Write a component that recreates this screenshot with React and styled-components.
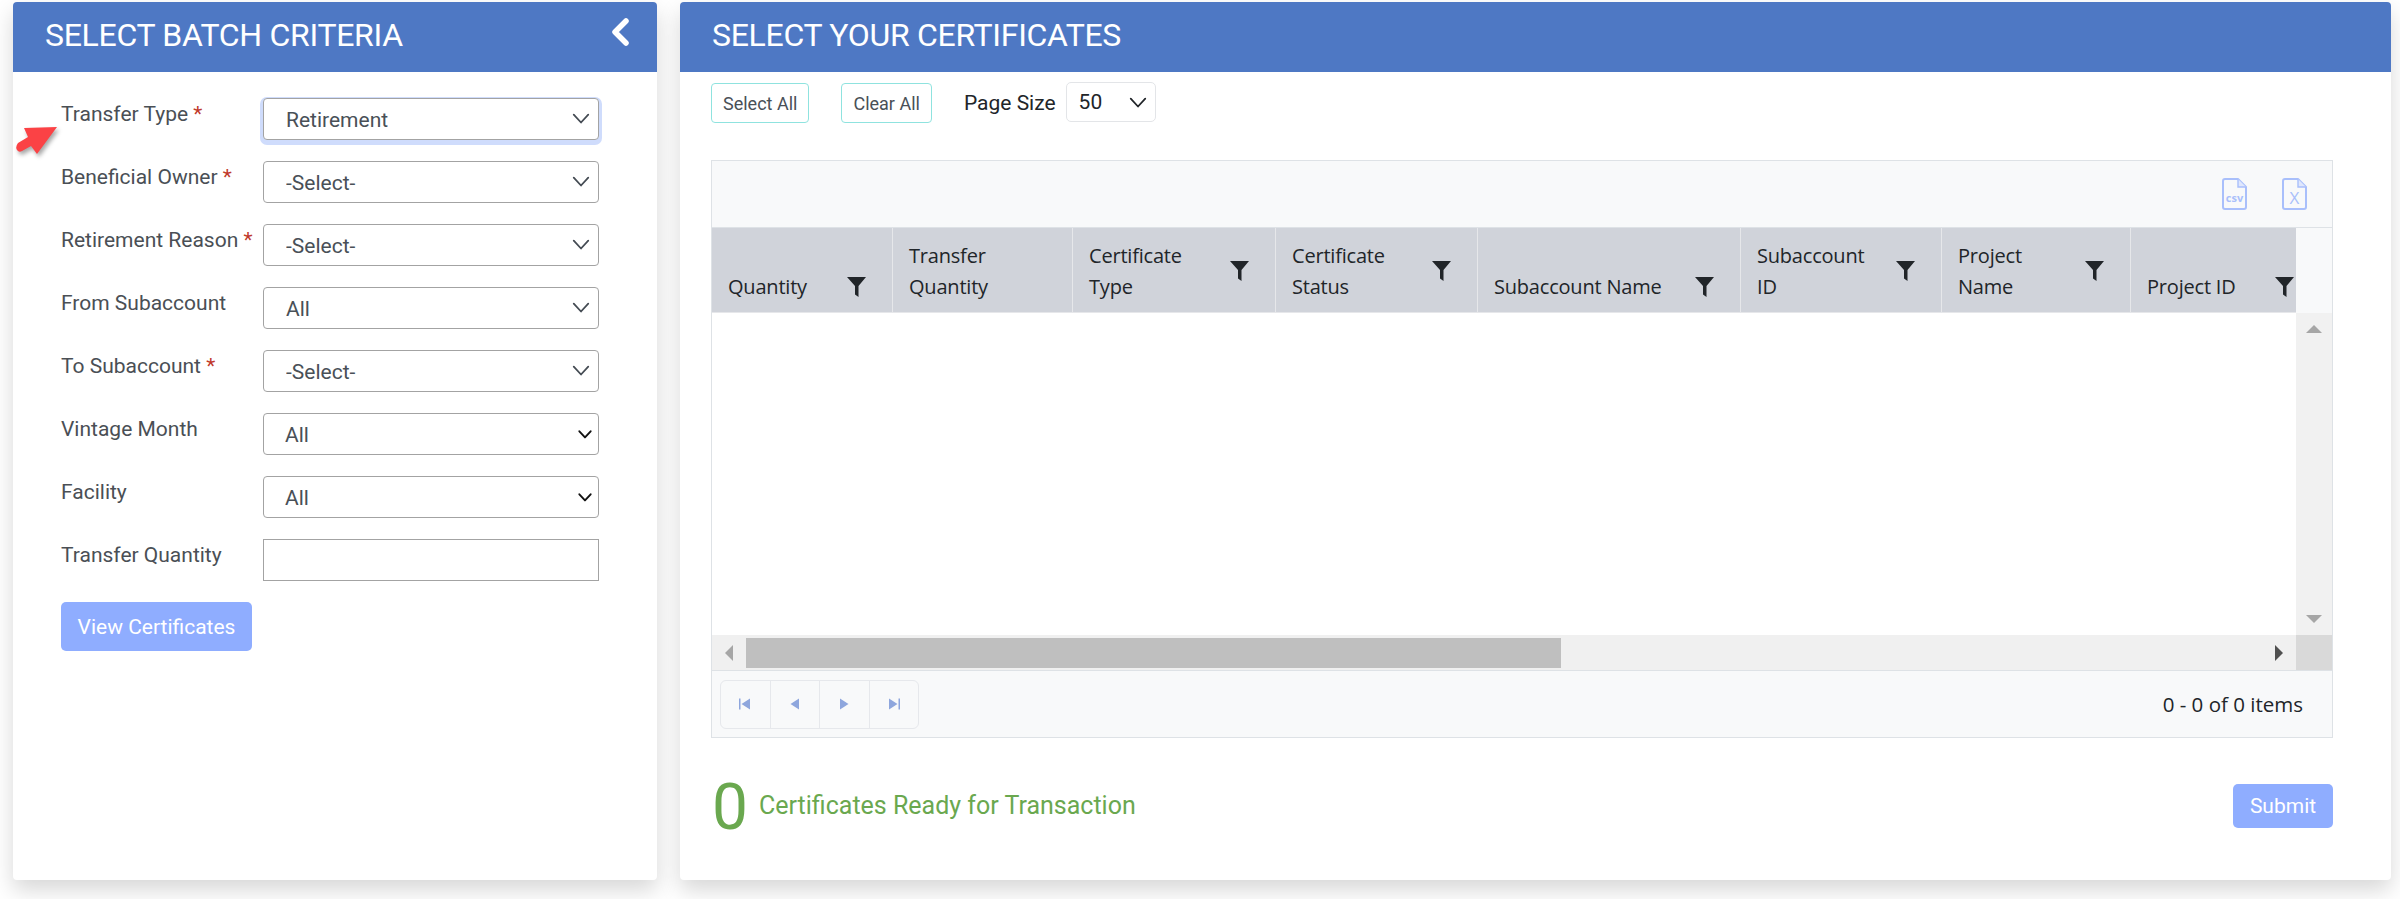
import React from "react";
import styled, { createGlobalStyle } from "styled-components";

const GlobalStyle = createGlobalStyle`
  html, body { margin: 0; padding: 0; background: #fff; }
  body { font-family: Roboto, "Liberation Sans", sans-serif; overflow: hidden; }
`;

const fields = [
  { label: "Transfer Type", required: true, value: "Retirement", focused: true },
  { label: "Beneficial Owner", required: true, value: "-Select-" },
  { label: "Retirement Reason", required: true, value: "-Select-" },
  { label: "From Subaccount", value: "All" },
  { label: "To Subaccount", required: true, value: "-Select-" },
  { label: "Vintage Month", value: "All", small: true },
  { label: "Facility", value: "All", small: true },
];

const columns = [
  { lines: ["Quantity"], width: 181, filter: true },
  { lines: ["Transfer", "Quantity"], width: 180 },
  { lines: ["Certificate", "Type"], width: 203, filter: true },
  { lines: ["Certificate", "Status"], width: 202, filter: true },
  { lines: ["Subaccount Name"], width: 263, filter: true },
  { lines: ["Subaccount", "ID"], width: 201, filter: true },
  { lines: ["Project", "Name"], width: 189, filter: true },
  { lines: ["Project ID"], width: 190, filter: true },
];

const Chevron = ({ width = 18, color = "#444b53", stroke = 1.6 }) => (
  <svg width={width} height={width * 0.62} viewBox="0 0 16 10" fill="none" stroke={color} strokeWidth={stroke} strokeLinecap="round" strokeLinejoin="round">
    <path d="M1.5 1.5 8 8.5l6.5-7" />
  </svg>
);

const FilterIcon = () => (
  <svg width="19" height="20" viewBox="0 0 19 20" fill="#212529">
    <path d="M0 0h19l-7.500 9v11L8 17.500V9z" />
  </svg>
);

const FileIcon = ({ children }) => (
  <svg width="25" height="32" viewBox="0 0 25 32" fill="none" stroke="#a9bffb" strokeWidth="2">
    <path d="M3 1h13l8 8v20a2 2 0 0 1-2 2H3a2 2 0 0 1-2-2V3a2 2 0 0 1 2-2z" strokeLinejoin="round" />
    <path d="M16 1v8h8" fill="#dfe7fd" strokeWidth="1.4" />
    {children}
  </svg>
);

const PagerGlyph = ({ d }) => (
  <svg width="14" height="14" viewBox="0 0 14 14" fill="#8ea6dd">
    <path d={d} />
  </svg>
);

export default function App() {
  return (
    <>
      <GlobalStyle />
      <Page>
        <SidePanel>
          <PanelHeader>
            <PanelTitle>SELECT BATCH CRITERIA</PanelTitle>
            <CollapseIcon width="20" height="28" viewBox="0 0 20 28" fill="none" stroke="#fff" strokeWidth="5.500" strokeLinecap="round" strokeLinejoin="round">
              <path d="M16 3 5 14l11 11" />
            </CollapseIcon>
          </PanelHeader>
          <FormBody>
            <PointerArrow width="46" height="34" viewBox="0 0 46 34">
              <path d="M44 2 11 3l4 9-10 6q-3 4-1 7 2 3 5 1l9-5 6 8z" fill="#fb4245" />
            </PointerArrow>
            {fields.map((f) => (
              <FieldRow key={f.label}>
                <FieldLabel>
                  {f.label}
                  {f.required && <Star> *</Star>}
                </FieldLabel>
                <SelectWrap>
                  <FieldSelect $focused={f.focused} $small={f.small} defaultValue={f.value}>
                    <option>{f.value}</option>
                  </FieldSelect>
                  {f.small ? (
                    <SmallArrow>
                      <Chevron width={14} color="#111" stroke={2.2} />
                    </SmallArrow>
                  ) : (
                    <SelectArrow>
                      <Chevron />
                    </SelectArrow>
                  )}
                </SelectWrap>
              </FieldRow>
            ))}
            <FieldRow>
              <FieldLabel>Transfer Quantity</FieldLabel>
              <QuantityInput />
            </FieldRow>
            <PrimaryButton type="button">View Certificates</PrimaryButton>
          </FormBody>
        </SidePanel>

        <MainPanel>
          <PanelHeader>
            <PanelTitle>SELECT YOUR CERTIFICATES</PanelTitle>
          </PanelHeader>
          <MainBody>
            <ActionBar>
              <OutlineButton type="button">Select All</OutlineButton>
              <OutlineButton type="button">Clear All</OutlineButton>
              <PageSizeLabel>Page Size</PageSizeLabel>
              <SelectWrap>
                <PageSizeSelect defaultValue="50">
                  <option>50</option>
                </PageSizeSelect>
                <SelectArrow>
                  <Chevron color="#212529" />
                </SelectArrow>
              </SelectWrap>
            </ActionBar>

            <Grid>
              <GridToolbar>
                <FileIcon>
                  <text x="12.500" y="24" textAnchor="middle" fontSize="11" fontWeight="700" fontFamily="Open Sans, sans-serif" fill="#a9bffb" stroke="none">csv</text>
                </FileIcon>
                <FileIcon>
                  <text x="12.500" y="26" textAnchor="middle" fontSize="17" fontFamily="Open Sans, sans-serif" fill="#a9bffb" stroke="none">X</text>
                </FileIcon>
              </GridToolbar>
              <HeaderRow>
                <HeaderCells>
                  {columns.map((c, i) => (
                    <HeaderCell key={i} $width={c.width}>
                      <HeaderInner>
                        <div>
                          {c.lines.map((line) => (
                            <div key={line}>{line}</div>
                          ))}
                        </div>
                        {c.filter && <FilterIcon />}
                      </HeaderInner>
                    </HeaderCell>
                  ))}
                </HeaderCells>
              </HeaderRow>
              <GridBody>
                <EmptyRows />
                <VerticalTrack>
                  <Triangle $dir="up" $color="#a6a6a6" />
                  <Triangle $dir="down" $color="#a6a6a6" />
                </VerticalTrack>
              </GridBody>
              <HorizontalBar>
                <HorizontalTrack>
                  <ArrowSlot>
                    <Triangle $dir="left" $color="#a6a6a6" />
                  </ArrowSlot>
                  <HorizontalThumb />
                  <ArrowSlot>
                    <Triangle $dir="right" $color="#505050" />
                  </ArrowSlot>
                </HorizontalTrack>
                <ScrollCorner />
              </HorizontalBar>
              <Pager>
                <PagerGroup>
                  <PagerButton><PagerGlyph d="M1 1.500h1.500v11H1zM12 1.500v11L3.500 7z" /></PagerButton>
                  <PagerButton><PagerGlyph d="M11 1.500v11L2.500 7z" /></PagerButton>
                  <PagerButton><PagerGlyph d="M3 1.500v11L11.500 7z" /></PagerButton>
                  <PagerButton><PagerGlyph d="M2 1.500v11L10.500 7zM11.500 1.500H13v11h-1.500z" /></PagerButton>
                </PagerGroup>
                <PagerInfo>0 - 0 of 0 items</PagerInfo>
              </Pager>
            </Grid>

            <Footer>
              <ReadyCount>
                <BigZero>0</BigZero>
                <ReadyText>Certificates Ready for Transaction</ReadyText>
              </ReadyCount>
              <SubmitButton type="button">Submit</SubmitButton>
            </Footer>
          </MainBody>
        </MainPanel>
      </Page>
    </>
  );
}

const Page = styled.div`
  display: flex;
  gap: 23px;
  width: 2400px;
  height: 899px;
  box-sizing: border-box;
  padding: 2px 9px 19px 13px;
`;

const Panel = styled.section`
  background: #fff;
  border-radius: 4px;
  box-shadow: 0 10px 22px rgba(0, 0, 0, 0.16);
  display: flex;
  flex-direction: column;
  overflow: hidden;
`;

const SidePanel = styled(Panel)`
  width: 644px;
  flex: none;
`;

const MainPanel = styled(Panel)`
  flex: 1;
`;

const PanelHeader = styled.header`
  height: 70px;
  flex: none;
  box-sizing: border-box;
  background: #4e78c4;
  display: flex;
  align-items: center;
  justify-content: space-between;
  padding: 0 27px 5px 32px;
`;

const PanelTitle = styled.h2`
  margin: 0;
  color: #fff;
  font-size: 32px;
  font-weight: 400;
  letter-spacing: -0.3px;
  line-height: 1;
`;

const CollapseIcon = styled.svg`
  margin-bottom: 6px;
`;

const FormBody = styled.div`
  position: relative;
  padding: 26px 0 0 48px;
`;

const PointerArrow = styled.svg`
  position: absolute;
  left: 0;
  top: 53px;
  filter: drop-shadow(2px 3px 2px rgba(0, 0, 0, 0.35));
`;

const FieldRow = styled.div`
  display: grid;
  grid-template-columns: 202px 336px;
  height: 63px;
`;

const FieldLabel = styled.label`
  font-size: 21px;
  line-height: 30px;
  padding-top: 1px;
  color: #4a4f55;
`;

const Star = styled.span`
  color: #c0392b;
`;

const SelectWrap = styled.div`
  position: relative;
  height: 42px;
`;

const FieldSelect = styled.select`
  width: 100%;
  height: 42px;
  box-sizing: border-box;
  background: #fff;
  border: 1px solid #a3a3a3;
  border-radius: 4px;
  padding: 2px 0 0 ${(p) => (p.$small ? "21px" : "22px")};
  color: #495057;
  font: 400 21px Roboto, sans-serif;
  appearance: none;
  box-shadow: ${(p) => (p.$focused ? "0 2px 0 3px #cfdcfc" : "none")};
  outline: none;
`;

const SelectArrow = styled.span`
  position: absolute;
  right: 9px;
  top: 15px;
  line-height: 0;
  pointer-events: none;
`;

const SmallArrow = styled(SelectArrow)`
  right: 7px;
  top: 17px;
`;

const QuantityInput = styled.input`
  width: 100%;
  height: 42px;
  box-sizing: border-box;
  border: 1px solid #a3a3a3;
  background: #fff;
  outline: none;
`;

const PrimaryButton = styled.button`
  display: block;
  width: 191px;
  height: 49px;
  border: 0;
  border-radius: 5px;
  background: #8fadff;
  color: #fff;
  font: 400 21px Roboto, sans-serif;
  padding: 0;
`;

const MainBody = styled.div`
  flex: 1;
  display: flex;
  flex-direction: column;
  padding: 10px 58px 0 31px;
`;

const ActionBar = styled.div`
  display: flex;
  align-items: center;
  height: 42px;
`;

const OutlineButton = styled.button`
  height: 40px;
  padding: 0 11px;
  margin-right: 32px;
  background: #fff;
  border: 1px solid #8fe3df;
  border-radius: 4px;
  color: #495057;
  font: 400 18px Roboto, sans-serif;
`;

const PageSizeLabel = styled.span`
  font-size: 21px;
  color: #212529;
  margin-right: 10px;
`;

const PageSizeSelect = styled.select`
  width: 90px;
  height: 40px;
  box-sizing: border-box;
  appearance: none;
  background: #fff;
  border: 1px solid #e3e5e8;
  border-radius: 5px;
  padding-left: 12px;
  color: #212529;
  font: 400 21px Roboto, sans-serif;
  outline: none;
`;

const Grid = styled.div`
  margin-top: 36px;
  height: 578px;
  flex: none;
  border: 1px solid #dee2e6;
  box-sizing: border-box;
  display: flex;
  flex-direction: column;
  background: #f8f9fa;
  font-family: "Open Sans", sans-serif;
`;

const GridToolbar = styled.div`
  height: 66px;
  flex: none;
  display: flex;
  align-items: center;
  justify-content: flex-end;
  gap: 35px;
  padding-right: 25px;
  border-bottom: 1px solid #dee2e6;
`;

const HeaderRow = styled.div`
  height: 85px;
  flex: none;
  padding-right: 36px;
`;

const HeaderCells = styled.div`
  display: flex;
  height: 100%;
  overflow: hidden;
  background: #d0d3da;
  border-bottom: 1px solid #e6e7ea;
  box-sizing: border-box;
`;

const HeaderCell = styled.div`
  flex: none;
  width: ${(p) => p.$width}px;
  box-sizing: border-box;
  padding: 0 26px 10px 16px;
  border-right: 1px solid #e6e7ea;
  display: flex;
  align-items: flex-end;
  color: #212529;
  font-size: 20px;
  line-height: 31px;
  letter-spacing: -0.2px;
`;

const HeaderInner = styled.div`
  flex: 1;
  display: flex;
  align-items: center;
  justify-content: space-between;
  white-space: nowrap;
`;

const GridBody = styled.div`
  flex: 1;
  display: flex;
  min-height: 0;
`;

const EmptyRows = styled.div`
  flex: 1;
  background: #fff;
`;

const VerticalTrack = styled.div`
  width: 36px;
  flex: none;
  background: #f1f1f1;
  display: flex;
  flex-direction: column;
  align-items: center;
  justify-content: space-between;
  padding: 12px 0;
  box-sizing: border-box;
`;

const Triangle = styled.span`
  width: 0;
  height: 0;
  display: block;
  border-style: solid;
  ${(p) =>
    p.$dir === "up"
      ? `border-width: 0 8px 8px; border-color: transparent transparent ${p.$color};`
      : p.$dir === "down"
      ? `border-width: 8px 8px 0; border-color: ${p.$color} transparent transparent;`
      : p.$dir === "left"
      ? `border-width: 8px 8px 8px 0; border-color: transparent ${p.$color} transparent transparent;`
      : `border-width: 8px 0 8px 8px; border-color: transparent transparent transparent ${p.$color};`}
`;

const HorizontalBar = styled.div`
  height: 35px;
  flex: none;
  display: flex;
  border-bottom: 1px solid #dee2e6;
`;

const HorizontalTrack = styled.div`
  flex: 1;
  display: flex;
  align-items: center;
  background: #f0f0f0;
`;

const ArrowSlot = styled.div`
  width: 34px;
  flex: none;
  display: flex;
  justify-content: center;
`;

const HorizontalThumb = styled.div`
  width: 815px;
  height: 30px;
  background: #bfbfbf;
  margin-right: auto;
`;

const ScrollCorner = styled.div`
  width: 36px;
  flex: none;
  background: #d9d9d9;
`;

const Pager = styled.div`
  height: 66px;
  flex: none;
  display: flex;
  align-items: center;
  justify-content: space-between;
  padding: 0 29px 0 8px;
`;

const PagerGroup = styled.div`
  display: flex;
  height: 49px;
  box-sizing: border-box;
  border: 1px solid #e6e8ec;
  border-radius: 6px;
`;

const PagerButton = styled.div`
  width: 48.5px;
  display: flex;
  align-items: center;
  justify-content: center;
  border-right: 1px solid #e6e8ec;

  &:last-child {
    border-right: 0;
  }
`;

const PagerInfo = styled.span`
  font-size: 20.500px;
  color: #212529;
`;

const Footer = styled.div`
  display: flex;
  align-items: center;
  justify-content: space-between;
  margin-top: 34px;
`;

const ReadyCount = styled.div`
  display: flex;
  align-items: center;
  color: #6aa84f;
  padding: 4px 0 0 1px;
`;

const BigZero = styled.span`
  font-size: 64px;
  font-weight: 400;
  line-height: 1;
  margin-right: 11px;
`;

const ReadyText = styled.span`
  font-size: 25px;
  margin-bottom: 5px;
`;

const SubmitButton = styled(PrimaryButton)`
  width: 100px;
  height: 44px;
`;
